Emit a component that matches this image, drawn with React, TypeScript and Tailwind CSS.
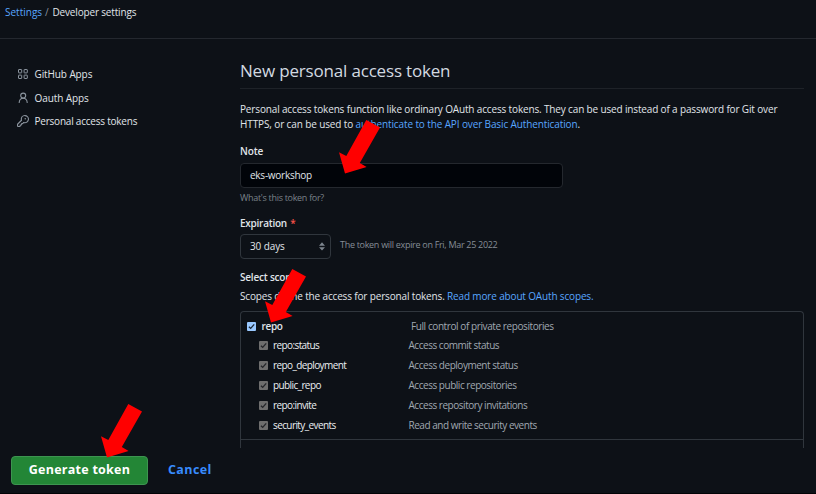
import React from 'react';

function Check({ muted = false }: { muted?: boolean }) {
  return (
    <svg className="h-[9px] w-[9px] shrink-0" viewBox="0 0 9 9">
      <rect width="9" height="9" rx="1" fill={muted ? '#6e6e6e' : '#99c8ff'} />
      <path d="M1.9 4.7 3.7 6.4 7.2 2.3" fill="none" stroke={muted ? '#24262a' : '#1c2733'} strokeWidth="1.3" />
    </svg>
  );
}

function Arrow({ className }: { className: string }) {
  return (
    <svg className={`absolute h-[54px] w-[41px] ${className}`} viewBox="0 0 41 54">
      <path d="M27.3 0 41 7.6 20.8 43 27.6 47 6 53.4 0 32.2 7.3 36Z" fill="#ff0000" />
    </svg>
  );
}

const scopes = [
  { name: 'repo:status', text: 'Access commit status' },
  { name: 'repo_deployment', text: 'Access deployment status' },
  { name: 'public_repo', text: 'Access public repositories' },
  { name: 'repo:invite', text: 'Access repository invitations' },
  { name: 'security_events', text: 'Read and write security events' },
];

export default function App() {
  return (
    <div className="relative flex h-[494px] w-[816px] flex-col overflow-hidden border-b border-[#020306] bg-[#0d1117] font-['Open_Sans','Noto_Sans',sans-serif] text-[10px] text-[#e0e5ea]">
      <header className="flex h-[39px] shrink-0 items-start border-b border-[#24282f] pl-[5px] pt-[5px] leading-[14px] whitespace-pre">
        <span className="w-[40px] text-[#58a6ff]">Settings</span>
        <span className="w-[7.5px] text-[#8b949e]">/</span>
        <span className="tracking-[-0.17px]">Developer settings</span>
      </header>

      <div className="flex h-[409px] shrink-0">
        <nav className="flex w-[240px] shrink-0 flex-col pl-[16.5px] pt-[23px] whitespace-nowrap">
          <div className="flex h-[24px] items-center">
            <svg className="mr-[6px] h-[12px] w-[12px] text-[#8b949e]" viewBox="0 0 12 12" fill="none" stroke="currentColor">
              <rect x="1.5" y="1.5" width="3.2" height="3.4" rx=".4" />
              <rect x="7.1" y="1.5" width="3.2" height="3.4" rx=".4" />
              <rect x="1.5" y="7.1" width="3.2" height="3.4" rx=".4" />
              <rect x="7.1" y="7.1" width="3.2" height="3.4" rx=".4" />
            </svg>
            <span className="tracking-[-0.1px]">GitHub Apps</span>
          </div>
          <div className="flex h-[24px] items-center">
            <svg className="mr-[6px] h-[12px] w-[12px] text-[#8b949e]" viewBox="0 0 12 12" fill="none" stroke="currentColor" strokeWidth="1.1" strokeLinecap="round">
              <circle cx="6.2" cy="3.6" r="2.5" />
              <path d="M2.2 10.5C2.4 7.9 4 6.3 6.2 6.3s3.8 1.6 4 4.2" />
            </svg>
            <span className="tracking-[-0.1px]">Oauth Apps</span>
          </div>
          <div className="flex h-[22px] items-center">
            <svg className="mr-[6px] h-[12px] w-[12px] text-[#8b949e]" viewBox="0 0 16 16" fill="currentColor">
              <path fillRule="evenodd" d="M6.5 5.5a4 4 0 112.731 3.795.75.75 0 00-.768.18L7.44 10.5H6.25a.75.75 0 00-.75.75v1.19l-.06.06H4.25a.75.75 0 00-.75.75v1.19l-.06.06H1.75a.25.25 0 01-.25-.25v-1.69l5.024-5.023a.75.75 0 00.181-.768A3.995 3.995 0 016.5 5.5zm4-5.5a5.5 5.5 0 00-5.348 6.788L.22 11.72a.75.75 0 00-.22.53v2C0 15.216.784 16 1.75 16h2a.75.75 0 00.53-.22l.5-.5a.75.75 0 00.22-.53V14h.75a.75.75 0 00.53-.22l.5-.5a.75.75 0 00.22-.53V12h.75a.75.75 0 00.53-.22l.932-.932A5.5 5.5 0 1010.5 0zm.5 6a1 1 0 100-2 1 1 0 000 2z" />
            </svg>
            <span className="tracking-[-0.22px]">Personal access tokens</span>
          </div>
        </nav>

        <main className="flex w-[564px] shrink-0 flex-col whitespace-nowrap">
          <h1 className="h-[50px] shrink-0 border-b border-[#1e2228] pt-[20px] text-[17px] leading-[24px] tracking-[-0.18px] text-[#d3dae1]">New personal access token</h1>
          <p className="mt-[13px] h-[30px] shrink-0 leading-[15px] tracking-[-0.15px]">
            <span className="block">Personal access tokens function like ordinary OAuth access tokens. They can be used instead of a password for Git over</span>
            <span className="block tracking-[-0.12px]">HTTPS, or can be used to <span className="text-[#58a6ff]">authenticate to the API over Basic Authentication</span>.</span>
          </p>
          <label className="mt-[12px] h-[14px] shrink-0 font-semibold leading-[14px] tracking-[-0.1px]">Note</label>
          <div className="mt-[5px] flex h-[25px] w-[323px] shrink-0 items-center rounded-[4px] border border-[#24282e] bg-[#010409] pl-[9px] tracking-[-0.25px]">eks-workshop</div>
          <div className="mt-[4px] h-[12px] shrink-0 text-[9px] leading-[12px] tracking-[-0.3px] text-[#7a8189]">What's this token for?</div>
          <div className="mt-[12px] h-[14px] shrink-0 font-semibold leading-[14px] tracking-[-0.25px]">Expiration <span className="ml-[1px] text-[#f85149]">*</span></div>
          <div className="mt-[4px] flex h-[25px] shrink-0">
            <div className="flex h-[25px] w-[91px] items-center justify-between rounded-[4px] border border-[#30363d] pl-[9px] pr-[5px]">
              <span className="tracking-[-0.1px]">30 days</span>
              <svg className="h-[9px] w-[6px]" viewBox="0 0 6 9" fill="#7d858e"><path d="M3 .3 6 3.7H0ZM0 5.2H6L3 8.6Z" /></svg>
            </div>
            <span className="ml-[9px] text-[9px] leading-[22px] tracking-[-0.3px] text-[#858d96]">The token will expire on Fri, Mar 25 2022</span>
          </div>
          <div className="mt-[11px] h-[14px] shrink-0 font-semibold leading-[14px] tracking-[-0.2px]">Select scopes</div>
          <p className="mt-[5px] h-[14px] shrink-0 leading-[14px] tracking-[-0.155px]">Scopes define the access for personal tokens. <span className="text-[#58a6ff]">Read more about OAuth scopes.</span></p>
          <section className="mt-[8px] flex h-[137px] shrink-0 flex-col rounded-t-[4px] border border-b-0 border-[#30363d]">
            <div className="flex h-[128px] shrink-0 flex-col border-b border-[#30363d] pt-[4px]">
              <div className="flex h-[20px] items-center pl-[6px]">
                <Check />
                <span className="ml-[5.5px] w-[149.5px] font-semibold tracking-[-0.35px]">repo</span>
                <span className="tracking-[-0.41px] text-[#a0a8b1]">Full control of private repositories</span>
              </div>
              {scopes.map((s) => (
                <div key={s.name} className="flex h-[19.9px] items-center pl-[18px]">
                  <span className="pb-px"><Check muted /></span>
                  <span className="ml-[5px] w-[135.5px] font-medium tracking-[-0.6px] text-[#eceff2]">{s.name}</span>
                  <span className="tracking-[-0.47px] text-[#a0a8b1]">{s.text}</span>
                </div>
              ))}
            </div>
          </section>
        </main>
      </div>

      <footer className="flex h-[45px] shrink-0 items-center pl-[11px]">
        <button className="flex h-[29px] w-[137px] items-center justify-center rounded-[4px] border border-[#3d9550] bg-[#238636] text-[12.5px] font-bold tracking-[0.26px] text-white">Generate token</button>
        <span className="ml-[20px] text-[12.5px] font-bold tracking-[0.4px] text-[#388bfd]">Cancel</span>
      </footer>

      <Arrow className="left-[339px] top-[120px]" />
      <Arrow className="left-[265px] top-[269px]" />
      <Arrow className="left-[101px] top-[404px]" />
    </div>
  );
}
